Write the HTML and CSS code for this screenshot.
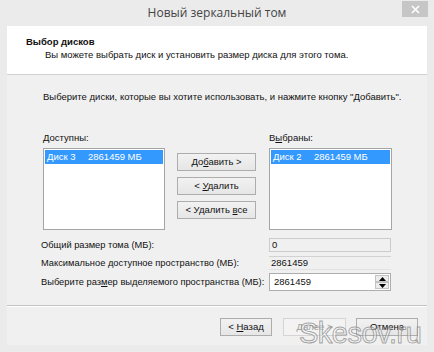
FILE: index.html
```html
<!DOCTYPE html>
<html>
<head>
<meta http-equiv="Content-Type" content="text/html; charset=utf-8">
<title>Новый зеркальный том</title>
<link rel="stylesheet" href="styles.css">
</head>
<body>

<div id="window">

<div id="titlebar">
<div class="titlebar_side"></div>
<div id="title">Новый зеркальный том</div>
<div class="titlebar_side titlebar_right">
<div id="btn_close"><svg width="9" height="9" viewBox="0 0 9 9"><path d="M1 1L8 8M8 1L1 8" stroke="#fff" stroke-width="1.6"/></svg></div>
</div>
</div>

<div id="client">

<div id="header">
<div id="header_title">Выбор дисков</div>
<div id="header_sub">Вы можете выбрать диск и установить размер диска для этого тома.</div>
</div>

<div id="page">
<div id="intro">Выберите диски, которые вы хотите использовать, и нажмите кнопку "Добавить".</div>

<div id="pick">
<div class="pick_col">
<div class="pick_label"><u>Д</u>оступны:</div>
<div class="listbox">
<div class="listbox_item listbox_item_sel"><span class="disk_name">Диск 3</span>2861459 МБ</div>
</div>
</div>

<div id="pick_buttons">
<div class="btn">До<u>б</u>авить &gt;</div>
<div class="btn">&lt; <u>У</u>далить</div>
<div class="btn">&lt; Удалить <u>в</u>се</div>
</div>

<div class="pick_col pick_col_right">
<div class="pick_label">В<u>ы</u>браны:</div>
<div class="listbox">
<div class="listbox_item listbox_item_sel"><span class="disk_name">Диск 2</span>2861459 МБ</div>
</div>
</div>
</div>

<div id="sizes">
<div class="size_label">Общий размер тома (МБ):</div>
<div class="field field_ro field_first">0</div>
<div class="size_label">Максимальное доступное пространство (МБ):</div>
<div class="field field_ro field_second">2861459</div>
<div class="size_label">Выберите раз<u>м</u>ер выделяемого пространства (МБ):</div>
<div class="field field_edit">
<div class="field_value">2861459</div>
<div class="spin">
<div class="spin_btn"><svg width="7" height="4" viewBox="0 0 7 4"><path d="M0 4L3.5 0L7 4Z" fill="#000"/></svg></div>
<div class="spin_btn"><svg width="7" height="4" viewBox="0 0 7 4"><path d="M0 0L3.5 4L7 0Z" fill="#000"/></svg></div>
</div>
</div>
</div>
</div>

<div id="footer">
<div class="btn btn_back">&lt; <u>Н</u>азад</div>
<div class="btn btn_next btn_disabled"><u>Д</u>алее &gt;</div>
<div class="btn btn_cancel">Отмена</div>
</div>

</div>

<div id="watermark">Skesov.ru</div>

</div>

</body>
</html>
```

FILE: styles.css
```css
body{
margin: 0;
background-color: #ebebeb;
font-family: "Liberation Sans", Arial, sans-serif;
font-size: 9.5px;
color: #111;
}

u{
text-decoration: underline;
text-underline-offset: 1px;
}

#window{
position: relative;
width: 434px;
height: 352px;
overflow: hidden;
background-color: #ebebeb;
display: flex;
flex-direction: column;
}

/* title bar */

#titlebar{
height: 26px;
display: grid;
grid-template-columns: 1fr auto 1fr;
align-items: start;
}

#title{
font-family: "Open Sans", sans-serif;
font-size: 12px;
color: #444;
line-height: 26px;
}

.titlebar_right{
display: flex;
justify-content: flex-end;
padding-right: 6px;
}

#btn_close{
width: 26px;
height: 16px;
margin-top: 1px;
background-color: #c6c6c6;
display: flex;
align-items: center;
justify-content: center;
}

/* client area */

#client{
flex: 1;
margin: 0 7px 7px 7px;
background-color: #f0f0f0;
display: flex;
flex-direction: column;
}

#header{
height: 49px;
background-color: white;
border-bottom: 1px solid #d0d0d0;
padding: 9px 0 0 19px;
box-sizing: border-box;
line-height: 13px;
}

#header_title{
font-weight: bold;
}

#header_sub{
padding-left: 19px;
}

#page{
flex: 1;
padding: 15px 0 0 36px;
line-height: 13px;
}

#intro{
height: 13px;
}

#pick{
display: flex;
margin-top: 28px;
}

.pick_label{
height: 13px;
margin-bottom: 4px;
}

.listbox{
width: 120px;
height: 79px;
background-color: white;
border: 1px solid #a5a5a5;
padding-top: 1px;
box-sizing: content-box;
}

.pick_col_right .listbox{
width: 121px;
}

.listbox_item{
height: 14px;
line-height: 14px;
padding-left: 2px;
margin: 0 1px;
}

.listbox_item_sel{
background-color: #3399ff;
color: white;
}

.disk_name{
display: inline-block;
width: 41px;
}

#pick_buttons{
display: flex;
flex-direction: column;
gap: 6px;
margin: 22px 13px 0 12px;
}

.btn{
width: 79px;
height: 18px;
box-sizing: border-box;
border: 1px solid #adadad;
background: linear-gradient(#f2f2f2, #e6e6e6);
text-align: center;
line-height: 16px;
}

/* size fields */

#sizes{
display: grid;
grid-template-columns: 228px 122px;
row-gap: 4px;
margin-top: 8px;
margin-left: -2px;
}

.size_label{
align-self: center;
white-space: nowrap;
font-size: 9.3px;
}

.field{
box-sizing: border-box;
padding-left: 2px;
}

.field_ro{
height: 14px;
line-height: 12px;
background-color: #f0f0f0;
}

.field_first{
border: 1px solid #cccccc;
}

.field_second{
border-top: 1px solid #d2d2d2;
border-bottom: 1px solid #e2e2e2;
}

.field_edit{
height: 18px;
margin-top: -1px;
background-color: white;
border: 1px solid #adadad;
display: flex;
}

.field_value{
flex: 1;
line-height: 16px;
padding-left: 2px;
}

.spin{
width: 14px;
display: flex;
flex-direction: column;
padding: 1px;
}

.spin_btn{
flex: 1;
border: 1px solid #c3c3c3;
background-color: #ececec;
display: flex;
align-items: center;
justify-content: center;
}

/* footer */

#footer{
height: 40px;
border-top: 1px solid #c4c4c4;
box-shadow: inset 0 1px 0 white;
display: flex;
justify-content: flex-end;
padding: 12px 9px 0 0;
box-sizing: border-box;
}

.btn_back{
width: 52px;
}

.btn_next{
width: 63px;
margin-left: 11px;
}

.btn_disabled{
color: #a0a0a0;
border-color: #d5d5d5;
background: #f3f3f3;
}

.btn_cancel{
width: 62px;
margin-left: 10px;
}

#watermark{
position: absolute;
left: 299px;
top: 316px;
font-family: "Liberation Sans", Arial, sans-serif;
font-size: 29px;
line-height: 34px;
letter-spacing: -0.5px;
color: rgba(255,255,255,0.45);
-webkit-text-stroke: 1px rgba(120,120,120,0.65);
}
```
